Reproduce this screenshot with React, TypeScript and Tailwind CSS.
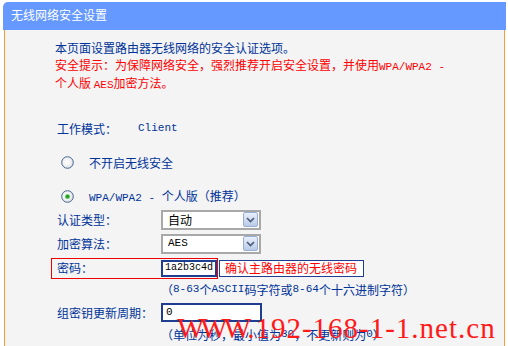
import React from "react";

const M = ({ children }: { children: React.ReactNode }) => (
  <span className="font-['Liberation_Mono',monospace] text-[11px]">{children}</span>
);

function Radio({ checked }: { checked?: boolean }) {
  return (
    <svg width="13" height="13" viewBox="0 0 13 13" className="shrink-0">
      <defs>
        <radialGradient id={checked ? "rg1" : "rg0"} cx="45%" cy="45%" r="60%">
          <stop offset="0" stopColor="#ffffff" />
          <stop offset="0.6" stopColor="#f0f0f0" />
          <stop offset="1" stopColor="#cfd6de" />
        </radialGradient>
      </defs>
      <circle cx="6.5" cy="6.5" r="5.8" fill={`url(#${checked ? "rg1" : "rg0"})`} stroke="#46678f" strokeWidth="1" />
      {checked && <circle cx="6.5" cy="6.5" r="2.6" fill="#7fd07f" />}
      {checked && <circle cx="6.5" cy="6.5" r="1.7" fill="#1f9f1f" />}
    </svg>
  );
}

function Select({ value, mono }: { value: string; mono?: boolean }) {
  return (
    <div className="w-[100px] h-[20px] bg-white border-2 border-[#a8a8a8] flex items-center justify-between pl-[5px] pr-px">
      <span className={mono ? "font-['Liberation_Mono',monospace] text-[11px] text-black" : "text-black text-[12px]"}>{value}</span>
      <div className="w-[15px] h-[15px] border border-[#98aed0] rounded-[2px] bg-gradient-to-b from-[#e8eef9] to-[#b9cbe9] flex items-center justify-center">
        <svg width="9" height="6" viewBox="0 0 9 6">
          <path d="M1 1 L4.5 4.5 L8 1" stroke="#4a5a78" strokeWidth="1.6" fill="none" />
        </svg>
      </div>
    </div>
  );
}

export default function App() {
  return (
    <div className="w-[508px] h-[346px] bg-white relative overflow-hidden font-['Noto_Sans_CJK_SC',sans-serif] text-[12px]">
      <div className="ml-[3px] pt-[2px] w-[503px]">
        <div className="h-[28px] bg-[#6699ff] rounded-tl-[5px] flex items-center pl-[8px] pb-[3px] text-white text-[12px]">
          无线网络安全设置
        </div>
        <div className="mx-px h-[316px] bg-[#f4f4f4] border-l border-r border-[#ff9933] text-[#003399] flex flex-col">
          <div className="pl-[50px] pt-[10px] leading-[16.5px] whitespace-nowrap">
            <div>本页面设置路由器无线网络的安全认证选项。</div>
            <div className="text-[#ff0000]">
              安全提示：为保障网络安全，强烈推荐开启安全设置，并使用<M>WPA/WPA2 -</M>
            </div>
            <div className="text-[#ff0000]">
              个人版 <M>AES</M>加密方法。
            </div>
          </div>

          <div className="mt-[25px] h-[20px] flex items-center pl-[52px]">
            <span className="w-[81px]">工作模式：</span>
            <M>Client</M>
          </div>

          <div className="mt-[14px] h-[20px] flex items-center pl-[56px]">
            <Radio />
            <span className="ml-[15px]">不开启无线安全</span>
          </div>

          <div className="mt-[14px] h-[20px] flex items-center pl-[56px]">
            <Radio checked />
            <span className="ml-[15px] whitespace-nowrap">
              <M>WPA/WPA2 - </M>个人版（推荐）
            </span>
          </div>

          <div className="mt-[3px] h-[20px] flex items-center pl-[52px]">
            <span className="w-[104px]">认证类型：</span>
            <Select value="自动" />
          </div>

          <div className="mt-[4px] h-[20px] flex items-center pl-[52px]">
            <span className="w-[104px]">加密算法：</span>
            <Select value="AES" mono />
          </div>

          <div className="mt-[4px] h-[21px] flex items-center">
            <div className="ml-[46px] h-[21px] w-[167px] border border-[#ee0000] flex items-center pl-[5px]">
              <span className="w-[104px]">密码：</span>
              <div className="w-[56px] h-[17px] border-2 border-[#1f3d91] bg-white flex items-center pl-[2px]">
                <span className="font-['Liberation_Mono',monospace] text-[10px] text-black leading-none">1a2b3c4d</span>
              </div>
            </div>
            <div className="ml-[1px] h-[17px] w-[145px] border border-[#1f3d91] bg-white flex items-center pl-[5px] text-[#ff0000] whitespace-nowrap">
              确认主路由器的无线密码
            </div>
          </div>

          <div className="mt-[1px] h-[20px] flex items-center pl-[156px] whitespace-nowrap">
            （<M>8-63</M>个<M>ASCII</M>码字符或<M>8-64</M>个十六进制字符）
          </div>

          <div className="mt-[3px] h-[20px] flex items-center pl-[52px]">
            <span className="w-[104px]">组密钥更新周期：</span>
            <div className="w-[101px] h-[19px] border-2 border-[#1f3d91] bg-white flex items-center pl-[3px]">
              <span className="font-['Liberation_Mono',monospace] text-[11px] text-black leading-none">0</span>
            </div>
          </div>

          <div className="mt-[2px] h-[20px] flex items-center pl-[156px] whitespace-nowrap">
            （单位为秒，最小值为<M>30</M>，不更新则为<M>0</M>）
          </div>
        </div>
      </div>

      <div className="absolute left-[177px] top-[313px] font-['Liberation_Serif',serif] text-[29px] leading-[30px] text-[#ff1a1a] whitespace-nowrap tracking-[1px]">
        <span className="tracking-[-4px]">WWW</span>.192-168-1-1.net.cn
      </div>
    </div>
  );
}
